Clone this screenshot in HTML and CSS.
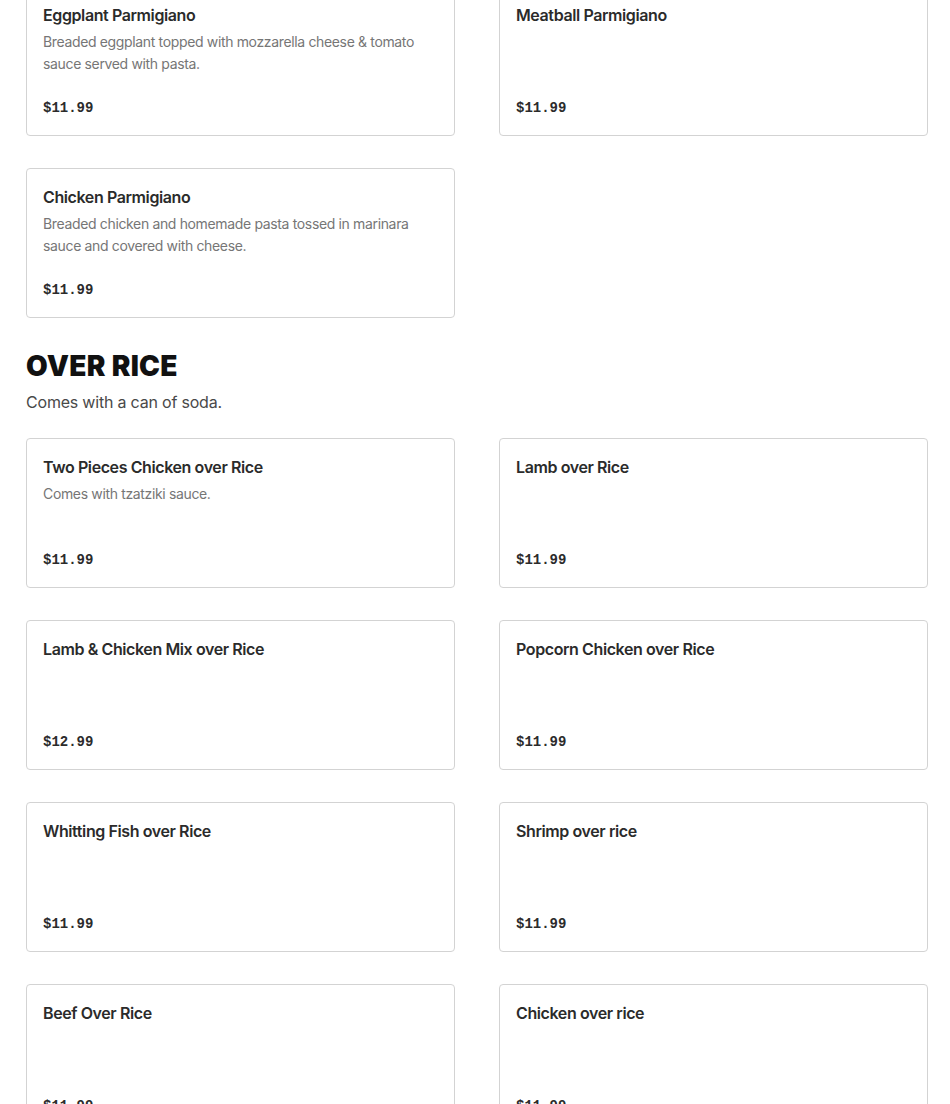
FILE: index.html
```html
<!DOCTYPE html>
<html lang="en">
<head>
  <meta charset="UTF-8" />
  <title>Menu</title>
  <meta name="viewport" content="width=device-width, initial-scale=1.0" />
  <link rel="stylesheet" href="styles.css">
</head>
<body>

<div class="menu">
  <section class="category">
    <div class="items">
      <div class="item">
        <h3>Eggplant Parmigiano</h3>
        <p class="desc">Breaded eggplant topped with mozzarella cheese &amp; tomato sauce served with pasta.</p>
        <div class="price">$11.99</div>
      </div>
      <div class="item">
        <h3>Meatball Parmigiano</h3>
        <div class="price">$11.99</div>
      </div>
      <div class="item">
        <h3>Chicken Parmigiano</h3>
        <p class="desc">Breaded chicken and homemade pasta tossed in marinara sauce and covered with cheese.</p>
        <div class="price">$11.99</div>
      </div>
    </div>
  </section>

  <section class="category">
    <h2>OVER RICE</h2>
    <p class="category-note">Comes with a can of soda.</p>
    <div class="items">
      <div class="item">
        <h3>Two Pieces Chicken over Rice</h3>
        <p class="desc">Comes with tzatziki sauce.</p>
        <div class="price">$11.99</div>
      </div>
      <div class="item">
        <h3>Lamb over Rice</h3>
        <div class="price">$11.99</div>
      </div>
      <div class="item">
        <h3>Lamb &amp; Chicken Mix over Rice</h3>
        <div class="price">$12.99</div>
      </div>
      <div class="item">
        <h3>Popcorn Chicken over Rice</h3>
        <div class="price">$11.99</div>
      </div>
      <div class="item">
        <h3>Whitting Fish over Rice</h3>
        <div class="price">$11.99</div>
      </div>
      <div class="item">
        <h3>Shrimp over rice</h3>
        <div class="price">$11.99</div>
      </div>
      <div class="item">
        <h3>Beef Over Rice</h3>
        <div class="price">$11.99</div>
      </div>
      <div class="item">
        <h3>Chicken over rice</h3>
        <div class="price">$11.99</div>
      </div>
    </div>
  </section>
</div>

</body>
</html>
```

FILE: styles.css
```css
body {
  margin: 0;
  font-family: Inter, "Liberation Sans", sans-serif;
  background: #fff;
  color: #2b2b2b;
}

.menu {
  padding: 0 22px 0 26px;
  margin-top: -14px;
}

.category h2 {
  margin: 30px 0 0;
  font-size: 28px;
  line-height: 36px;
  font-weight: 900;
  color: #111;
  letter-spacing: 0.3px;
}

.category-note {
  margin: 8px 0 26px;
  font-size: 16px;
  line-height: 20px;
  color: #494949;
  letter-spacing: -0.2px;
}

.items {
  display: grid;
  grid-template-columns: repeat(2, 429px);
  gap: 32px 44px;
}

.item {
  box-sizing: border-box;
  height: 150px;
  border: 1px solid #d3d3d3;
  border-radius: 4px;
  padding: 16px;
  display: flex;
  flex-direction: column;
}

.item h3 {
  margin: 0 0 4px;
  font-size: 16px;
  line-height: 24px;
  font-weight: 600;
  color: #2b2b2b;
  letter-spacing: -0.4px;
}

.desc {
  margin: 0;
  font-size: 14px;
  line-height: 22px;
  color: #767676;
  letter-spacing: -0.35px;
}

.price {
  margin-top: auto;
  font-family: "Liberation Mono", monospace;
  font-size: 14px;
  line-height: 22px;
  font-weight: bold;
  color: #2b2b2b;
}
```
